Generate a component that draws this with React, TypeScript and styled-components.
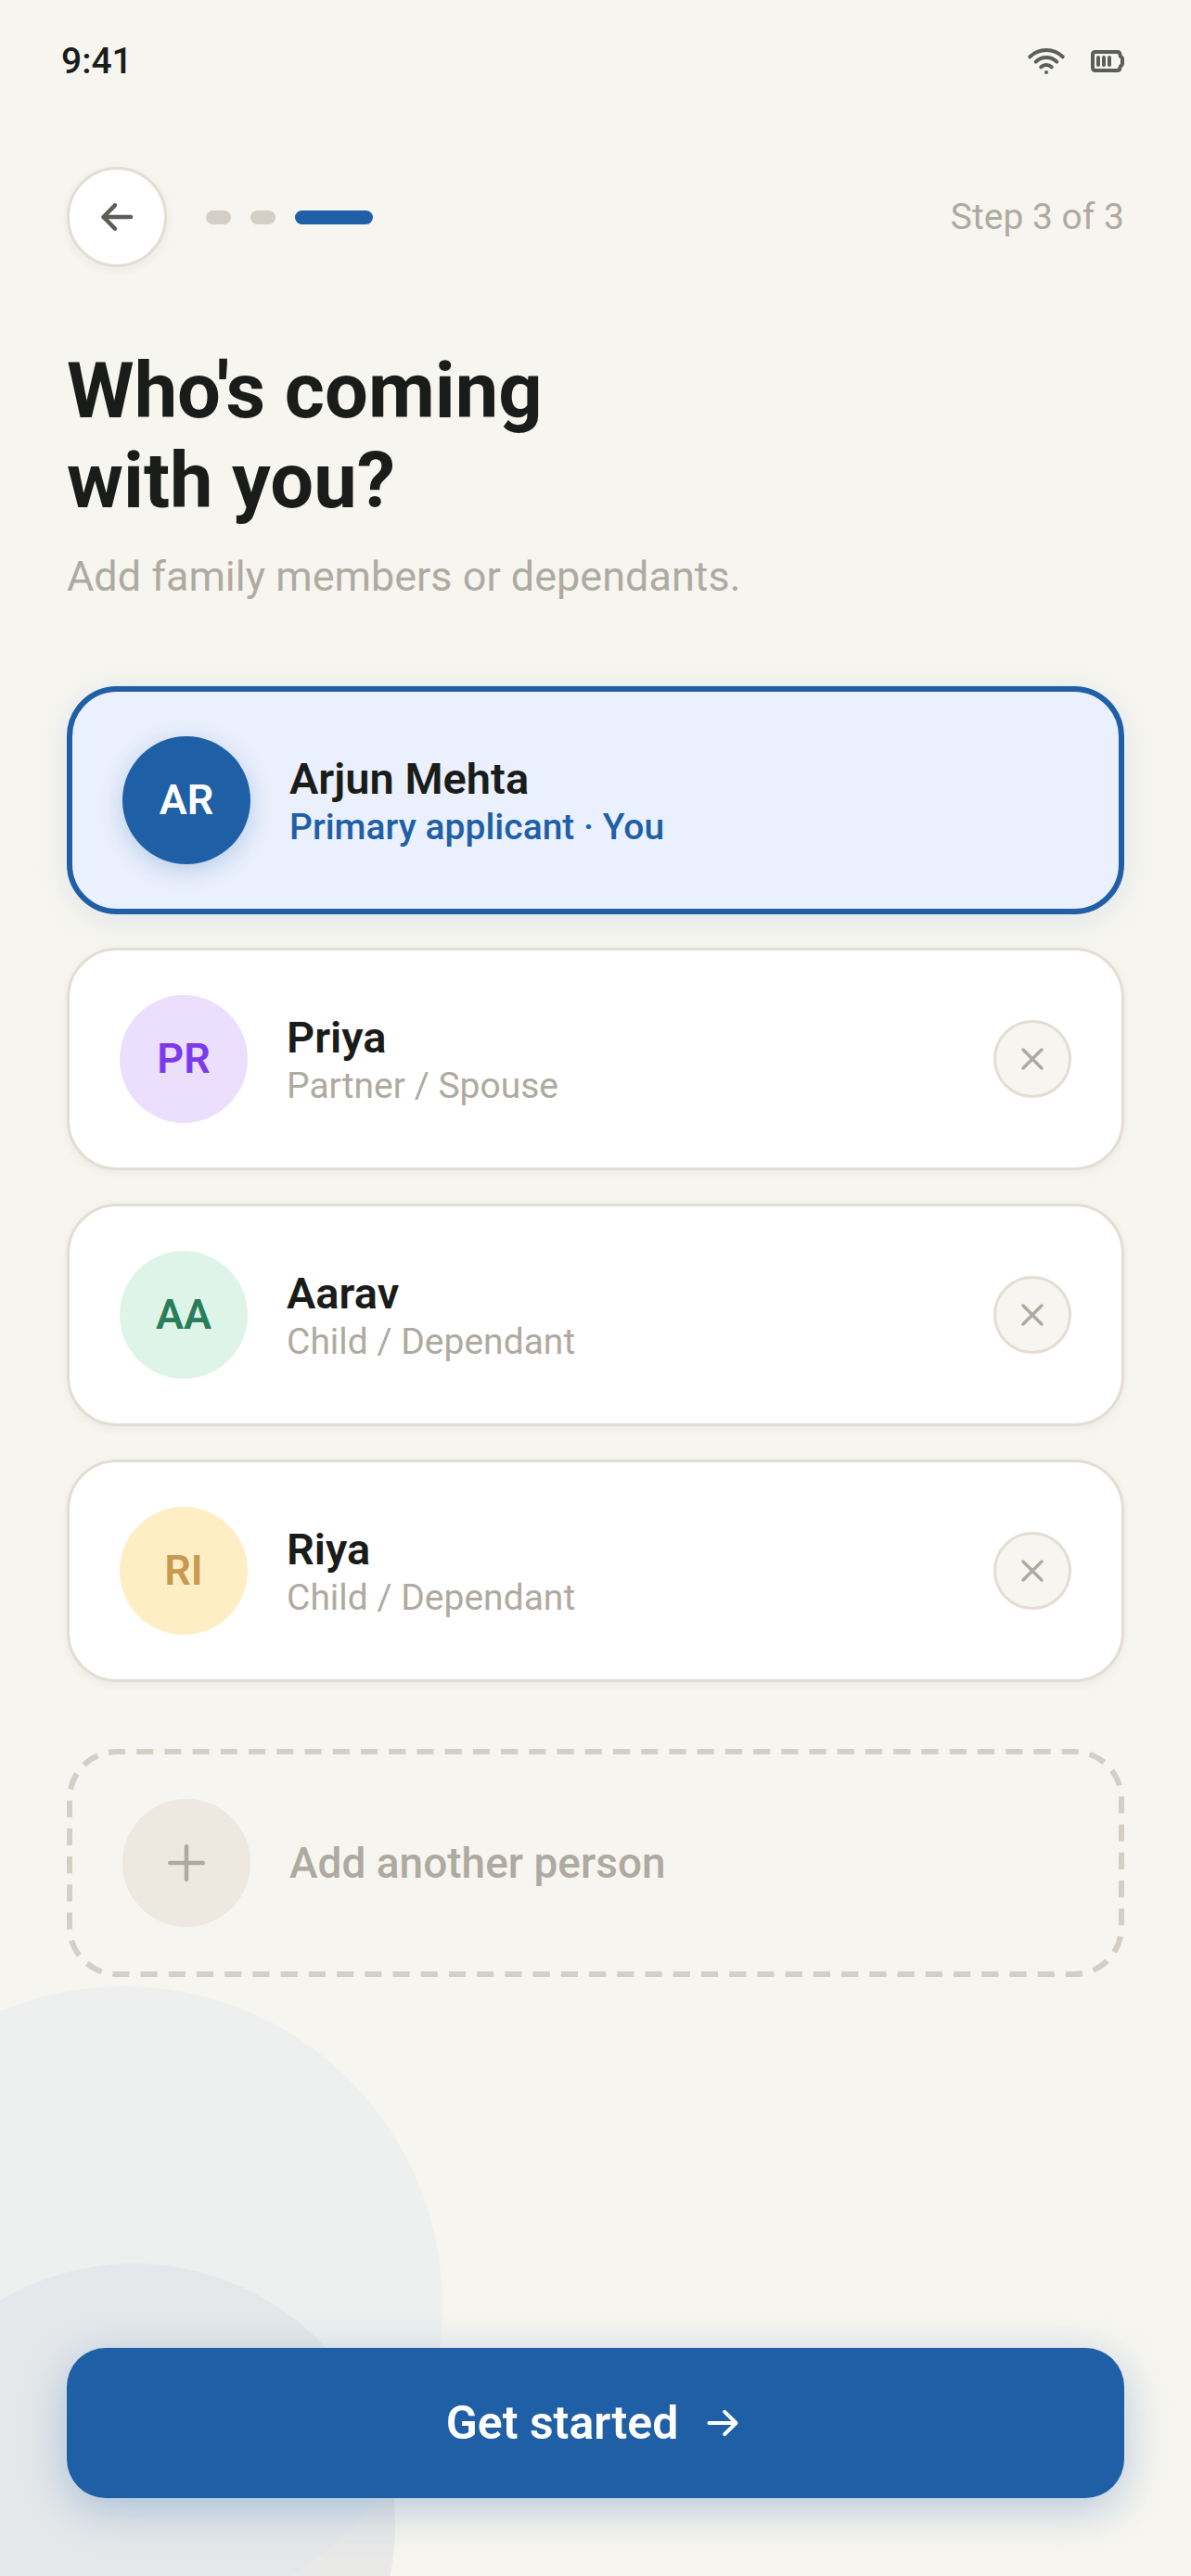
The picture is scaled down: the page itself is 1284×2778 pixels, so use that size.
import React from "react";
import styled, { createGlobalStyle, css } from "styled-components";

const color = {
  page: "#f6f5f0",
  ink: "#1a1c19",
  icon: "#5c5e58",
  muted: "#afaaa0",
  line: "#e3ddd3",
  track: "#d4cfc4",
  blue: "#1f5fa6",
  blueTint: "#eaf0fd",
  white: "#ffffff",
};

const GlobalStyle = createGlobalStyle`
  *, *::before, *::after { box-sizing: border-box; }
  body {
    margin: 0;
    background: ${color.page};
    color: ${color.ink};
    font-family: Roboto, "Liberation Sans", sans-serif;
  }
  button { font: inherit; color: inherit; cursor: pointer; }
  svg { display: block; flex: none; }
`;

const Screen = styled.div`
  position: relative;
  min-height: 100vh;
  display: flex;
  flex-direction: column;
  overflow: hidden;
  background: ${color.page};
`;

const Bubble = styled.div<{ $size: number; $left: number; $bottom: number; $fill: string }>`
  position: absolute;
  left: ${(p) => p.$left}px;
  bottom: ${(p) => p.$bottom}px;
  width: ${(p) => p.$size}px;
  height: ${(p) => p.$size}px;
  border-radius: 50%;
  background: ${(p) => p.$fill};
`;

const StatusBar = styled.div`
  height: 132px;
  padding: 0 66px;
  display: flex;
  align-items: center;
  justify-content: space-between;
  color: ${color.icon};
`;

const Clock = styled.time`
  font-size: 39px;
  font-weight: 500;
  line-height: 48px;
  color: ${color.ink};
`;

const StatusIcons = styled.div`
  display: flex;
  gap: 18px;
`;

const Content = styled.main`
  position: relative;
  flex: 1;
  display: flex;
  flex-direction: column;
  padding: 48px 72px 84px;
`;

const Header = styled.header`
  display: flex;
  align-items: center;
  gap: 42px;
`;

const BackButton = styled.button`
  width: 108px;
  height: 108px;
  padding: 0;
  display: grid;
  place-items: center;
  border: 3px solid ${color.line};
  border-radius: 50%;
  background: ${color.white};
  color: ${color.icon};
  box-shadow: 0 3px 12px rgba(26, 28, 25, 0.06);
`;

const Steps = styled.div`
  flex: 1;
  display: flex;
  gap: 21px;
`;

const StepDot = styled.span<{ $active?: boolean }>`
  width: ${(p) => (p.$active ? 84 : 27)}px;
  height: 15px;
  border-radius: 8px;
  background: ${(p) => (p.$active ? color.blue : color.track)};
`;

const StepLabel = styled.span`
  font-size: 39px;
  line-height: 48px;
  color: ${color.muted};
`;

const Title = styled.h1`
  margin: 85px 0 0;
  font-size: 83px;
  font-weight: 700;
  line-height: 97px;
`;

const Subtitle = styled.p`
  margin: 25px 0 0;
  font-size: 45px;
  line-height: 60px;
  color: ${color.muted};
`;

const People = styled.ul`
  list-style: none;
  margin: 88px 0 0;
  padding: 0;
  display: flex;
  flex-direction: column;
  gap: 36px;
`;

const rowLayout = css`
  display: flex;
  align-items: center;
  gap: 42px;
  padding: 48px 54px;
  border-radius: 54px;
`;

const PersonCard = styled.li<{ $primary?: boolean }>`
  ${rowLayout}
  ${(p) =>
    p.$primary
      ? css`
          border: 6px solid ${color.blue};
          background: ${color.blueTint};
          box-shadow: 0 6px 36px rgba(31, 95, 166, 0.1);
        `
      : css`
          border: 3px solid ${color.line};
          background: ${color.white};
          box-shadow: 0 3px 12px rgba(26, 28, 25, 0.05);
        `}
`;

const Avatar = styled.span<{ $bg: string; $fg: string; $raised?: boolean }>`
  flex: none;
  width: 138px;
  height: 138px;
  display: grid;
  place-items: center;
  border-radius: 50%;
  background: ${(p) => p.$bg};
  color: ${(p) => p.$fg};
  font-size: 45px;
  font-weight: 600;
  line-height: 54px;
  box-shadow: ${(p) => (p.$raised ? "0 6px 24px rgba(31, 95, 166, 0.25)" : "none")};
`;

const PersonText = styled.div`
  flex: 1;
  min-width: 0;
`;

const PersonName = styled.div`
  font-size: 47px;
  font-weight: 600;
  line-height: 57px;
`;

const PersonRole = styled.div<{ $primary?: boolean }>`
  font-size: 39px;
  font-weight: ${(p) => (p.$primary ? 500 : 400)};
  line-height: 48px;
  color: ${(p) => (p.$primary ? color.blue : color.muted)};
`;

const RemoveButton = styled.button`
  flex: none;
  width: 84px;
  height: 84px;
  padding: 0;
  display: grid;
  place-items: center;
  border: 3px solid ${color.line};
  border-radius: 50%;
  background: ${color.page};
  color: ${color.muted};
`;

const AddButton = styled.button`
  ${rowLayout}
  position: relative;
  margin-top: 72px;
  border: 6px solid transparent;
  background: transparent;
  text-align: left;
`;

const DashedOutline = styled.svg`
  position: absolute;
  inset: -6px;
  width: calc(100% + 12px);
  height: calc(100% + 12px);

  rect {
    width: calc(100% - 6px);
    height: calc(100% - 6px);
  }
`;

const AddLabel = styled.span`
  font-size: 46px;
  font-weight: 500;
  line-height: 57px;
  color: ${color.muted};
`;

const StartButton = styled.button`
  margin-top: auto;
  height: 162px;
  display: flex;
  align-items: center;
  justify-content: center;
  gap: 24px;
  border: 0;
  border-radius: 42px;
  background: ${color.blue};
  color: ${color.white};
  box-shadow: 0 12px 48px rgba(31, 95, 166, 0.3);
`;

const StartLabel = styled.span`
  font-size: 50px;
  font-weight: 600;
  line-height: 60px;
`;

type IconProps = { width?: number; children: React.ReactNode };

const Icon = ({ width = 4, children }: IconProps) => (
  <svg
    width="48"
    height="48"
    viewBox="0 0 48 48"
    fill="none"
    stroke="currentColor"
    strokeWidth={width}
    strokeLinecap="round"
    strokeLinejoin="round"
    aria-hidden="true"
  >
    {children}
  </svg>
);

const WifiIcon = () => (
  <Icon>
    <path d="M6.3 19.3A25.3 25.3 0 0 1 41.7 19.3" />
    <path d="M12.7 24.7A15.9 15.9 0 0 1 35.3 24.7" />
    <path d="M18.3 30.3A8.2 8.2 0 0 1 29.7 30.3" />
    <circle cx="24" cy="36" r="2" fill="currentColor" stroke="none" />
  </Icon>
);

const BatteryIcon = () => (
  <Icon>
    <path d="M11 14H34.5Q37.3 14 37.5 17Q37.5 18.7 39 19.5Q40 20 40 21.5V26.5Q40 28 39 28.5Q37.5 29.3 37.5 31Q37.3 34 34.5 34H11Q8 34 8 31V17Q8 14 11 14Z" />
    <path d="M14 20V28M20 20V28M26 20V28" />
  </Icon>
);

const ArrowLeftIcon = () => (
  <Icon width={4.5}>
    <path d="M39 24H9.5M22 11.3L9.5 24L22 36.7" />
  </Icon>
);

const ArrowRightIcon = () => (
  <Icon>
    <path d="M9.5 24H38.5M26.2 11.8L38.5 24L26.2 36.2" />
  </Icon>
);

const CloseIcon = () => (
  <Icon width={3.5}>
    <path d="M14 14L34 34M34 14L14 34" />
  </Icon>
);

const PlusIcon = () => (
  <Icon width={4.5}>
    <path d="M24 6.2V41.8M6.2 24H41.8" />
  </Icon>
);

type Person = {
  initials: string;
  name: string;
  role: string;
  bg: string;
  fg: string;
  primary?: boolean;
};

const people: Person[] = [
  { initials: "AR", name: "Arjun Mehta", role: "Primary applicant · You", bg: color.blue, fg: color.white, primary: true },
  { initials: "PR", name: "Priya", role: "Partner / Spouse", bg: "#ecdffe", fg: "#7c3aed" },
  { initials: "AA", name: "Aarav", role: "Child / Dependant", bg: "#dff4e8", fg: "#2a7d5b" },
  { initials: "RI", name: "Riya", role: "Child / Dependant", bg: "#ffeec4", fg: "#c89a50" },
];

export default function App() {
  return (
    <>
      <GlobalStyle />
      <Screen>
        <Bubble $size={564} $left={-138} $bottom={-227} $fill="#e9e9e8" />
        <Bubble $size={687} $left={-210} $bottom={-51} $fill="rgba(223, 231, 239, 0.35)" />
        <StatusBar>
          <Clock>9:41</Clock>
          <StatusIcons>
            <WifiIcon />
            <BatteryIcon />
          </StatusIcons>
        </StatusBar>
        <Content>
          <Header>
            <BackButton type="button" aria-label="Back">
              <ArrowLeftIcon />
            </BackButton>
            <Steps aria-hidden="true">
              <StepDot />
              <StepDot />
              <StepDot $active />
            </Steps>
            <StepLabel>Step 3 of 3</StepLabel>
          </Header>
          <Title>
            Who's coming
            <br />
            with you?
          </Title>
          <Subtitle>Add family members or dependants.</Subtitle>
          <People>
            {people.map((person) => (
              <PersonCard key={person.name} $primary={person.primary}>
                <Avatar $bg={person.bg} $fg={person.fg} $raised={person.primary}>
                  {person.initials}
                </Avatar>
                <PersonText>
                  <PersonName>{person.name}</PersonName>
                  <PersonRole $primary={person.primary}>{person.role}</PersonRole>
                </PersonText>
                {!person.primary && (
                  <RemoveButton type="button" aria-label={`Remove ${person.name}`}>
                    <CloseIcon />
                  </RemoveButton>
                )}
              </PersonCard>
            ))}
          </People>
          <AddButton type="button">
            <DashedOutline aria-hidden="true">
              <rect
                x="3"
                y="3"
                rx="51"
                fill="none"
                stroke={color.track}
                strokeWidth="6"
                pathLength="2640"
                strokeDasharray="18 12"
                strokeDashoffset="9"
              />
            </DashedOutline>
            <Avatar $bg="#ede8e0" $fg={color.muted}>
              <PlusIcon />
            </Avatar>
            <AddLabel>Add another person</AddLabel>
          </AddButton>
          <StartButton type="button">
            <StartLabel>Get started</StartLabel>
            <ArrowRightIcon />
          </StartButton>
        </Content>
      </Screen>
    </>
  );
}
